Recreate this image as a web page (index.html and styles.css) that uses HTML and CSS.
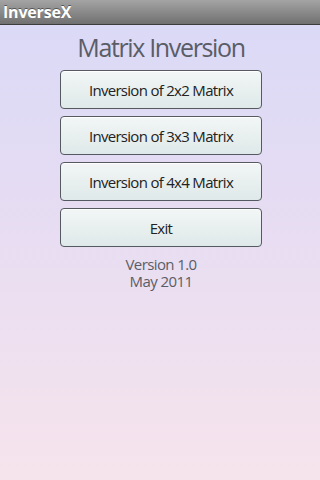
FILE: index.html
```
<!DOCTYPE html>
<html>
<head>
<meta charset="utf-8">
<link rel="stylesheet" href="styles.css">
</head>
<body>
<div class="titlebar">InverseX</div>
<main class="content">
  <h1 class="heading">Matrix Inversion</h1>
  <div class="buttons">
    <button class="btn">Inversion of 2x2 Matrix</button>
    <button class="btn">Inversion of 3x3 Matrix</button>
    <button class="btn">Inversion of 4x4 Matrix</button>
    <button class="btn">Exit</button>
  </div>
  <p class="version">Version 1.0<br>May 2011</p>
</main>
</body>
</html>
```
FILE: styles.css
```
html, body {
  margin: 0;
  padding: 0;
  width: 320px;
  height: 480px;
  overflow: hidden;
  font-family: "Open Sans", "Noto Sans", sans-serif;
}
body {
  display: flex;
  flex-direction: column;
  background: linear-gradient(to bottom, #d9d9f7 0%, #e8ddf2 50%, #f6e4ec 100%);
}
.titlebar {
  flex: none;
  height: 25px;
  box-sizing: border-box;
  padding-left: 3px;
  line-height: 24px;
  color: #fff;
  font-weight: bold;
  font-size: 16px;
  letter-spacing: -0.2px;
  background: linear-gradient(to bottom, #a4a4a4, #707070);
  border-bottom: 1px solid #3c3c3c;
  text-shadow: 0 -1px 0 #555;
}
.content {
  display: flex;
  flex-direction: column;
  align-items: center;
  padding-top: 7px;
  padding-left: 2px;
}
.heading {
  margin: 0;
  font-weight: normal;
  font-size: 25px;
  line-height: 30px;
  letter-spacing: -1.35px;
  color: #5a5d66;
}
.buttons {
  margin-top: 8px;
  display: flex;
  flex-direction: column;
  gap: 7px;
}
.btn {
  width: 202px;
  height: 39px;
  margin: 0;
  padding: 0;
  border: 1px solid #555a60;
  border-radius: 4px;
  background: linear-gradient(to bottom, #f2f6f6, #dfe9e9);
  font-family: "Open Sans", "Noto Sans", sans-serif;
  font-size: 15px;
  letter-spacing: -0.7px;
  color: #222;
  box-shadow: inset 0 1px 0 #fff;
}
.version {
  margin: 9px 0 0;
  text-align: center;
  font-size: 15px;
  line-height: 17px;
  letter-spacing: -0.6px;
  color: #5a5d66;
}
```
